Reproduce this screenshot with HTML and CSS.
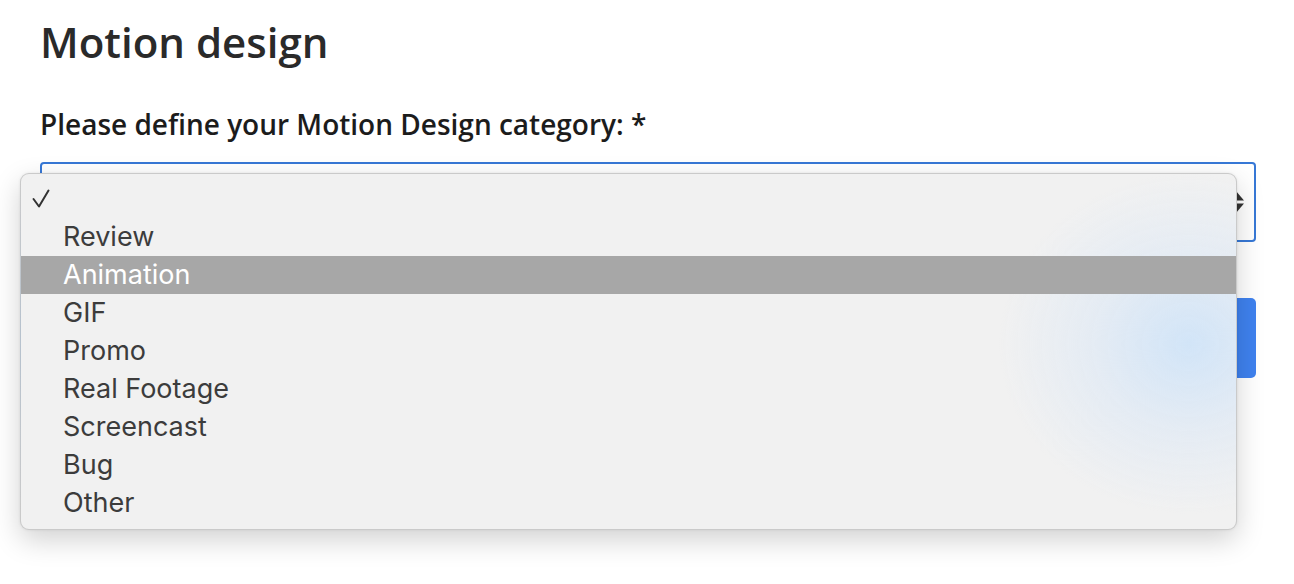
FILE: index.html
```html
<!DOCTYPE html>
<html lang="en">
<head>
<meta charset="utf-8">
<title>Motion design</title>
<link rel="stylesheet" href="styles.css">
</head>
<body>
<main class="page">
  <h1 class="title">Motion design</h1>
  <label class="label">Please define your Motion Design category: *</label>
  <div class="select">
    <svg class="select-arrows" width="18" height="24" viewBox="0 0 18 24"><path d="M9 1 L17 10.5 L1 10.5 Z" fill="#333"/><path d="M9 23 L17 13.5 L1 13.5 Z" fill="#333"/></svg>
  </div>
  <div class="button"></div>

  <div class="menu">
    <div class="item item-check">
      <svg class="check" width="22" height="22" viewBox="0 0 22 22"><path d="M2.5 11 L8 18.5 L17.5 2.5" fill="none" stroke="#333" stroke-width="2" stroke-linecap="round" stroke-linejoin="round"/></svg>
    </div>
    <div class="item">Review</div>
    <div class="item item-active">Animation</div>
    <div class="item">GIF</div>
    <div class="item">Promo</div>
    <div class="item">Real Footage</div>
    <div class="item">Screencast</div>
    <div class="item">Bug</div>
    <div class="item">Other</div>
  </div>
</main>
</body>
</html>
```

FILE: styles.css
```css
html, body {
  margin: 0;
  padding: 0;
  background: #ffffff;
}

.page {
  position: relative;
  padding: 18px 38px 0 40px;
  font-family: "Open Sans", "Noto Sans", sans-serif;
  color: #262626;
  height: 584px;
  box-sizing: border-box;
}

.title {
  margin: 0;
  font-size: 42px;
  line-height: 48px;
  font-weight: 600;
  color: #2a2a2a;
}

.label {
  display: block;
  margin-top: 42px;
  font-size: 28px;
  line-height: 32px;
  font-weight: 600;
  color: #1c1c1c;
}

.select {
  margin-top: 22px;
  height: 80px;
  box-sizing: border-box;
  border: 2px solid #3778d6;
  border-radius: 4px;
  display: flex;
  align-items: center;
  justify-content: flex-end;
  padding-right: 9px;
}

.select-arrows {
  display: block;
}

.button {
  margin-top: 56px;
  height: 80px;
  border-radius: 5px;
  background: #3f82ef;
}

.menu {
  position: absolute;
  left: 20px;
  top: 173px;
  width: 1217px;
  height: 357px;
  box-sizing: border-box;
  padding-top: 6px;
  border: 1px solid rgba(0, 0, 0, 0.16);
  border-radius: 9px;
  background:
    radial-gradient(ellipse 190px 170px at 1168px 170px, rgba(208, 228, 248, 0.95), rgba(218, 231, 246, 0.55) 50%, rgba(240, 240, 240, 0) 100%),
    #f1f1f1;
  box-shadow: 0 10px 28px rgba(0, 0, 0, 0.18), 0 0 3px rgba(0, 0, 0, 0.08);
  font-family: "Inter", "Noto Sans", sans-serif;
  font-size: 27px;
  color: #3c3c3c;
  overflow: hidden;
}

.item {
  height: 38px;
  line-height: 38px;
  padding-left: 42px;
  white-space: nowrap;
}

.item-check {
  position: relative;
}

.check {
  position: absolute;
  left: 10px;
  top: 8px;
}

.item-active {
  background: #a7a7a7;
  color: #ffffff;
}
```
